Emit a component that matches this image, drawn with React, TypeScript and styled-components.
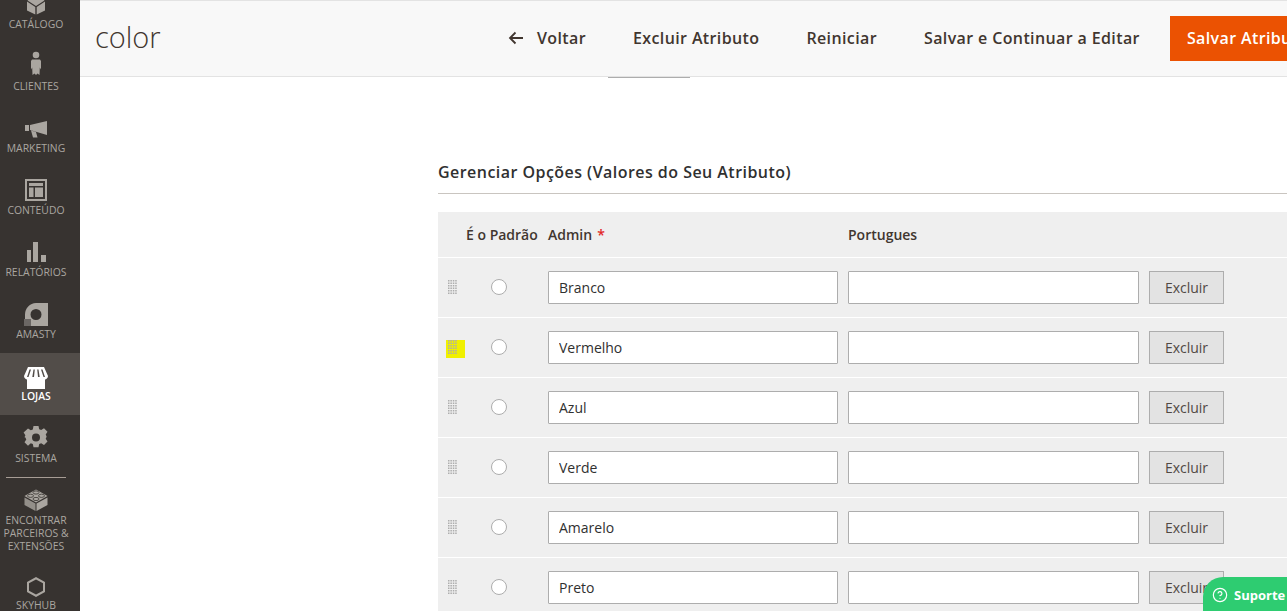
import React from 'react';
import styled, { createGlobalStyle } from 'styled-components';
import { CircleHelp } from 'lucide-react';

const GlobalStyle = createGlobalStyle`
    html, body {
        margin: 0;
        padding: 0;
        background: #fff;
        overflow: hidden;
    }
    * {
        box-sizing: border-box;
    }
`;

const Page = styled.div`
    position: relative;
    display: flex;
    width: 1287px;
    height: 611px;
    overflow: hidden;
    font-family: "Open Sans", "Noto Sans", sans-serif;
    color: #303030;
`;

// the menu is scrolled a little, so the first item is cut by the top edge
const Sidebar = styled.nav`
    flex: 0 0 80px;
    height: 611px;
    overflow: hidden;
    background: #373330;
`;

const MenuList = styled.div`
    margin-top: -19px;
`;

const MenuItem = styled.div<{ $active?: boolean; $tall?: boolean }>`
    display: flex;
    flex-direction: column;
    align-items: center;
    height: ${p => (p.$tall ? '84px' : '62px')};
    padding: ${p => (p.$tall ? '12px' : '13px')} 8px 0 0;
    background: ${p => (p.$active ? '#524d49' : 'transparent')};
    color: ${p => (p.$active ? '#fff' : '#aaa6a0')};
`;

const MenuIcon = styled.svg`
    display: block;
    flex: 0 0 24px;
    width: 24px;
    height: 24px;
    fill: currentColor;
    overflow: visible;
`;

const MenuLabel = styled.span<{ $active?: boolean }>`
    width: 72px;
    font-size: 10.4px;
    line-height: 13px;
    text-align: center;
    text-transform: uppercase;
    white-space: nowrap;
    font-weight: ${p => (p.$active ? 600 : 400)};
`;

const MenuDivider = styled.div`
    width: 60px;
    height: 1px;
    margin-left: 6px;
    background: #a79d95;
`;

const Main = styled.main`
    flex: 1;
    min-width: 0;
`;

const Header = styled.header`
    display: flex;
    align-items: center;
    height: 77px;
    padding-left: 15px;
    background: #f8f8f8;
    border-top: 1px solid #e3e3e3;
    border-bottom: 1px solid #e3e3e3;
`;

const PageTitle = styled.h1`
    flex: 0 0 396px;
    margin: 0;
    padding-bottom: 4px;
    font-size: 29px;
    font-weight: 300;
    color: #41362f;
`;

const Actions = styled.div`
    display: flex;
    flex: none;
    align-items: center;
    gap: 13px;
`;

const ActionButton = styled.button<{ $primary?: boolean }>`
    display: flex;
    align-items: center;
    height: 45px;
    padding: 0 17px 2px;
    border: 0;
    background: ${p => (p.$primary ? '#eb5202' : 'transparent')};
    color: ${p => (p.$primary ? '#fff' : '#41362f')};
    font-family: inherit;
    font-size: 16px;
    font-weight: 600;
    letter-spacing: 0.38px;
    white-space: nowrap;
`;

const BackArrow = styled.svg`
    width: 16px;
    height: 14px;
    margin-right: 13px;
    fill: none;
    stroke: #41362f;
    stroke-width: 1.8;
`;

const TabStub = styled.div`
    width: 82px;
    height: 1px;
    margin-left: 528px;
    background: #adadad;
`;

const OptionsSection = styled.section`
    width: 849px;
    margin: 83px 0 0 358px;
`;

const SectionTitle = styled.h2`
    height: 33px;
    margin: 0 0 18px;
    border-bottom: 1px solid #c9c5c0;
    font-size: 16px;
    font-weight: 600;
    line-height: 22px;
    letter-spacing: 0.46px;
    color: #303030;
`;

const HeadRow = styled.div`
    display: grid;
    grid-template-columns: 28px 82px 300px 1fr;
    align-items: center;
    height: 46px;
    background: #efefef;
    border-bottom: 1px solid #fff;
    font-size: 14px;
    font-weight: 600;
    color: #41362f;
`;

const HeadCell = styled.div`
    white-space: nowrap;
`;

const Required = styled.span`
    margin-left: 5px;
    color: #e22626;
`;

const OptionRow = styled.div`
    display: grid;
    grid-template-columns: 28px 82px 300px 301px 75px;
    align-items: center;
    height: 60px;
    background: #efefef;
    border-bottom: 1px solid #fff;
`;

const DragCell = styled.div`
    align-self: start;
    padding: 22px 0 0 8px;
`;

const DragHandle = styled.div<{ $marked?: boolean }>`
    width: 19px;
    height: 18px;
    padding-left: 2px;
    background: ${p => (p.$marked ? '#f0f000' : 'transparent')};
`;

const DragDots = styled.svg`
    display: block;
    width: 9px;
    height: 14px;
    fill: #adadad;
`;

const Radio = styled.span`
    display: block;
    width: 16px;
    height: 16px;
    margin: 0 0 2px 25px;
    background: #fff;
    border: 1px solid #adadad;
    border-radius: 50%;
`;

const TextInput = styled.input<{ $wide?: boolean }>`
    display: block;
    width: ${p => (p.$wide ? '291px' : '290px')};
    height: 33px;
    padding: 0 10px;
    background: #fff;
    border: 1px solid #adadad;
    border-radius: 1px;
    font-family: inherit;
    font-size: 14px;
    color: #303030;
    outline: none;
`;

const DeleteButton = styled.button`
    width: 75px;
    height: 33px;
    padding: 0;
    background: #e3e3e3;
    border: 1px solid #adadad;
    font-family: inherit;
    font-size: 14px;
    color: #514943;
`;

const SupportBadge = styled.div`
    position: absolute;
    top: 577px;
    left: 1203px;
    display: flex;
    align-items: center;
    gap: 6px;
    width: 120px;
    height: 60px;
    padding: 0 0 24px 9px;
    background: #2ecc71;
    border-radius: 20px;
    color: #fff;
    font-size: 13px;
    font-weight: 700;
`;

const menu = [
    {
        label: 'Catálogo',
        icon: <path d="M3 7.500l8.300 5.500v7.500L3 16.500V7.500Zm18 0V16.500l-8.300 4V13L21 7.500ZM12 1.500l8.500 5L12 12 3.500 6.500 12 1.500Z" />,
    },
    {
        label: 'Clientes',
        icon: <path d="M12-4.300a3.300 3.300 0 1 1 0 6.600 3.300 3.300 0 0 1 0-6.600ZM8 3.500h8L17 5v8.500l-1.200-2-.3 7.500-2-1.500L12 19l-1.500-1.500-2 1.500-.3-7.500L7 13.500V5l1-1.500Z" />,
    },
    {
        label: 'Marketing',
        icon: <path d="M1 7h4v6H1V7Zm5 0 17-4v14L6 12V7Zm1 5.500 5 1.500 1.500 5.500H9l-2-7Z" />,
    },
    {
        label: 'Conteúdo',
        icon: <path fillRule="evenodd" transform="translate(0 -2)" d="M1 1h22v22H1V1Zm2 2v18h18V3H3Zm2 2h14v3H5V5Zm0 4.500h4.500V19H5V9.500Zm6 0h8V19h-8V9.500Z" />,
    },
    {
        label: 'Relatórios',
        icon: <path d="M3 8h4v12H3V8Zm6-8h5v20H9V0Zm8 13h5v7h-5v-7Z" />,
    },
    {
        label: 'Amasty',
        icon: (
            <>
                <path fillRule="evenodd" d="M12-1H24V22H7V16H1V10.500A11.500 11.500 0 0 1 12-1Zm0 6a5.500 5.500 0 1 0 0 11 5.500 5.500 0 0 0 0-11Z" />
                <path d="M0 15h7v7H0z" fill="#6b6764" />
            </>
        ),
    },
    {
        label: 'Lojas',
        active: true,
        icon: <path fillRule="evenodd" d="M4 1H20L24 10C24 12 22 13.500 21 13.500V23H3V13.500C2 13.500 0 12 0 10L4 1ZM5.500 3.500 3 11H4.500L7 3.500H5.500ZM9.500 3.500 8.300 11H10L10.800 3.500H9.500ZM13.200 3.500 14 11H15.700L14.500 3.500H13.200ZM17 3.500 19.500 11H21L18.500 3.500H17Z" />,
    },
    {
        label: 'Sistema',
        icon: <path fillRule="evenodd" transform="translate(0 -2.500)" d="M9.500 .5h5l.7 3.200 2 .9 2.800-1.800 3.500 3.500-1.800 2.800.9 2v.1l-.9 2 1.800 2.800-3.500 3.500-2.800-1.800-2 .9-.7 3.200h-5l-.7-3.200-2-.9L4 20.200.5 16.700l1.800-2.800-.9-2-.9-.1v-.1l.9-1.900-1.800-2.800L4 3l2.800 1.800 2-.9.700-3.400ZM12 8a4 4 0 1 0 0 8 4 4 0 0 0 0-8Z" />,
    },
    {
        label: 'Encontrar Parceiros & Extensões',
        lines: ['Encontrar', 'Parceiros &', 'Extensões'],
        icon: (
            <g transform="translate(0 -1)">
                <path d="M12 .5 23.500 7 12 13.500.5 7 12 .5Z" />
                <path d="M.5 8.500l11 6V22l-11-6V8.500Z" opacity=".8" />
                <path d="M23.500 8.500l-11 6V22l11-6V8.500Z" />
                <g stroke="#373330" strokeWidth=".8">
                    <ellipse cx="12" cy="3.500" rx="3" ry="1.600" />
                    <ellipse cx="6.500" cy="6.800" rx="3" ry="1.600" />
                    <ellipse cx="17.500" cy="6.800" rx="3" ry="1.600" />
                    <ellipse cx="12" cy="10" rx="3" ry="1.600" />
                </g>
            </g>
        ),
    },
    {
        label: 'Skyhub',
        icon: <path fillRule="evenodd" d="M12 2 21 7V17L12 22 3 17V7L12 2Zm0 2.400L5 8.300V15.700L12 19.600 19 15.700V8.300L12 4.400Z" />,
    },
];

const options = ['Branco', 'Vermelho', 'Azul', 'Verde', 'Amarelo', 'Preto'];

// 4 x 6 grid of small squares
const dots: [number, number][] = [];
for (let y = 0; y < 6; y++) {
    for (let x = 0; x < 4; x++) {
        dots.push([x, y]);
    }
}

export default function App() {
    return (
        <Page>
            <GlobalStyle />
            <Sidebar>
                <MenuList>
                    {menu.map(item => (
                        <React.Fragment key={item.label}>
                            {item.lines && <MenuDivider />}
                            <MenuItem $active={item.active} $tall={!!item.lines}>
                                <MenuIcon viewBox="0 0 24 24">{item.icon}</MenuIcon>
                                {item.lines ? (
                                    item.lines.map(line => <MenuLabel key={line}>{line}</MenuLabel>)
                                ) : (
                                    <MenuLabel $active={item.active}>{item.label}</MenuLabel>
                                )}
                            </MenuItem>
                        </React.Fragment>
                    ))}
                </MenuList>
            </Sidebar>
            <Main>
                <Header>
                    <PageTitle>color</PageTitle>
                    <Actions>
                        <ActionButton>
                            <BackArrow viewBox="0 0 16 14">
                                <path d="M15 7H2M7.500 1.500 2 7l5.500 5.500" />
                            </BackArrow>
                            Voltar
                        </ActionButton>
                        <ActionButton>Excluir Atributo</ActionButton>
                        <ActionButton>Reiniciar</ActionButton>
                        <ActionButton>Salvar e Continuar a Editar</ActionButton>
                        <ActionButton $primary>Salvar Atributo</ActionButton>
                    </Actions>
                </Header>
                <TabStub />
                <OptionsSection>
                    <SectionTitle>Gerenciar Opções (Valores do Seu Atributo)</SectionTitle>
                    <HeadRow>
                        <HeadCell />
                        <HeadCell>É o Padrão</HeadCell>
                        <HeadCell>
                            Admin<Required>*</Required>
                        </HeadCell>
                        <HeadCell>Portugues</HeadCell>
                    </HeadRow>
                    {options.map(name => (
                        <OptionRow key={name}>
                            <DragCell>
                                <DragHandle $marked={name === 'Vermelho'}>
                                    <DragDots viewBox="0 0 9 14">
                                        {dots.map(([x, y]) => (
                                            <rect key={`${x}-${y}`} x={x * 2.4} y={y * 2.5} width="1.500" height="1.500" />
                                        ))}
                                    </DragDots>
                                </DragHandle>
                            </DragCell>
                            <Radio />
                            <TextInput defaultValue={name} />
                            <TextInput $wide />
                            <DeleteButton>Excluir</DeleteButton>
                        </OptionRow>
                    ))}
                </OptionsSection>
            </Main>
            <SupportBadge>
                <CircleHelp size={16} strokeWidth={1.75} />
                Suporte
            </SupportBadge>
        </Page>
    );
}
